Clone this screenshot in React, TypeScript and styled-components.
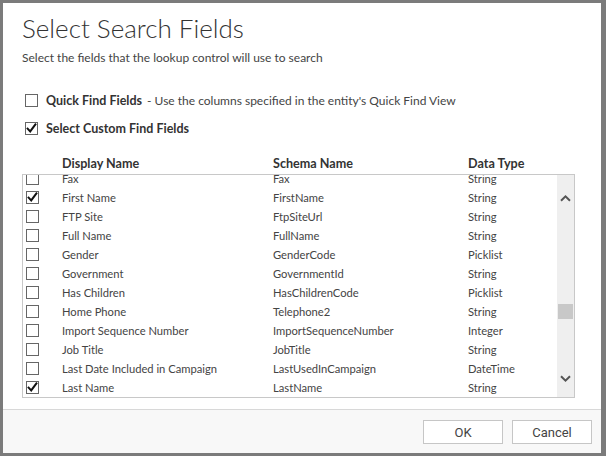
import React from 'react'
import styled, { createGlobalStyle } from 'styled-components'

const FONT = '"Segoe UI", Lato, "Liberation Sans", sans-serif'

const GlobalStyle = createGlobalStyle`
  html, body {
    margin: 0;
    padding: 0;
    background: #7b7b7b;
  }
  body {
    font-family: ${FONT};
    color: #444;
  }
`

interface FieldRow {
  display: string
  schema: string
  type: string
  checked?: boolean
}

const fields: FieldRow[] = [
  { display: 'Fax', schema: 'Fax', type: 'String' },
  { display: 'First Name', schema: 'FirstName', type: 'String', checked: true },
  { display: 'FTP Site', schema: 'FtpSiteUrl', type: 'String' },
  { display: 'Full Name', schema: 'FullName', type: 'String' },
  { display: 'Gender', schema: 'GenderCode', type: 'Picklist' },
  { display: 'Government', schema: 'GovernmentId', type: 'String' },
  { display: 'Has Children', schema: 'HasChildrenCode', type: 'Picklist' },
  { display: 'Home Phone', schema: 'Telephone2', type: 'String' },
  { display: 'Import Sequence Number', schema: 'ImportSequenceNumber', type: 'Integer' },
  { display: 'Job Title', schema: 'JobTitle', type: 'String' },
  { display: 'Last Date Included in Campaign', schema: 'LastUsedInCampaign', type: 'DateTime' },
  { display: 'Last Name', schema: 'LastName', type: 'String', checked: true },
]

const CheckBox: React.FC<{ checked?: boolean }> = ({ checked }) => (
  <BoxSvg width="13" height="13" viewBox="0 0 13 13">
    <rect x="0.5" y="0.5" width="12" height="12" fill="#fff" stroke="#666" />
    {checked && (
      <path d="M2.6 6.6 L5.2 9.4 L10.4 2.4" fill="none" stroke="#111" strokeWidth="2" strokeLinecap="square" />
    )}
  </BoxSvg>
)

const Chevron: React.FC<{ down?: boolean }> = ({ down }) => (
  <svg width="11" height="7" viewBox="0 0 11 7">
    <path
      d={down ? 'M1 1.2 L5.5 5.6 L10 1.2' : 'M1 5.8 L5.5 1.4 L10 5.8'}
      fill="none"
      stroke="#555"
      strokeWidth="2"
    />
  </svg>
)

const App: React.FC = () => {
  return (
    <>
      <GlobalStyle />
      <Page>
        <Dialog>
          <Body>
            <Title>Select Search Fields</Title>
            <Subtitle>Select the fields that the lookup control will use to search</Subtitle>

            <Options>
              <OptionRow>
                <CheckBox />
                <OptionLabel>
                  <strong>Quick Find Fields</strong> - Use the columns specified in the entity's Quick Find View
                </OptionLabel>
              </OptionRow>
              <OptionRow>
                <CheckBox checked />
                <OptionLabel>
                  <strong>Select Custom Find Fields</strong>
                </OptionLabel>
              </OptionRow>
            </Options>

            <HeaderRow>
              <span />
              <HeaderCell>Display Name</HeaderCell>
              <HeaderCell>Schema Name</HeaderCell>
              <HeaderCell>Data Type</HeaderCell>
            </HeaderRow>

            <ListBox>
              <Viewport>
                <Rows $scroll={6}>
                  {fields.map((f) => (
                    <Row key={f.schema}>
                      <CheckCell>
                        <CheckBox checked={f.checked} />
                      </CheckCell>
                      <Cell>{f.display}</Cell>
                      <Cell>{f.schema}</Cell>
                      <Cell>{f.type}</Cell>
                    </Row>
                  ))}
                </Rows>
              </Viewport>
              <ScrollBar>
                <ArrowButton $top>
                  <Chevron />
                </ArrowButton>
                <Track>
                  <Thumb $offset={98} />
                </Track>
                <ArrowButton>
                  <Chevron down />
                </ArrowButton>
              </ScrollBar>
            </ListBox>
          </Body>

          <Footer>
            <FooterButton>OK</FooterButton>
            <FooterButton>Cancel</FooterButton>
          </Footer>
        </Dialog>
      </Page>
    </>
  )
}

const Page = styled.div`
  box-sizing: border-box;
  width: 606px;
  height: 456px;
  padding: 3px 5px 3px 3px;
`

const Dialog = styled.div`
  height: 100%;
  background: #fff;
  display: flex;
  flex-direction: column;
`

const Body = styled.div`
  padding: 8px 26px 0 19px;
  display: flex;
  flex-direction: column;
`

const Title = styled.h1`
  margin: 0;
  font-family: ${FONT};
  font-weight: 300;
  font-size: 26px;
  line-height: 34px;
  color: #333;
`

const Subtitle = styled.div`
  margin-top: 5px;
  font-size: 12px;
  line-height: 16px;
  color: #444;
`

const Options = styled.div`
  margin-top: 25px;
  display: flex;
  flex-direction: column;
  gap: 9px;
`

const OptionRow = styled.div`
  display: flex;
  align-items: center;
  gap: 8px;
  padding-left: 3px;
  height: 19px;
  font-size: 12px;

  strong {
    font-size: 12.5px;
    font-weight: 700;
    color: #333;
    margin-right: 2px;
  }
`

const OptionLabel = styled.span`
  color: #444;
`

const BoxSvg = styled.svg`
  display: block;
  flex: none;
`

const HeaderRow = styled.div`
  margin-top: 14px;
  display: grid;
  grid-template-columns: 40px 211px 195px 1fr;
  height: 22px;
  align-items: center;
`

const HeaderCell = styled.div`
  font-size: 12.6px;
  font-weight: 700;
  color: #333;
`

const ListBox = styled.div`
  display: flex;
  height: 222px;
  border: 1px solid #c8c8c8;
`

const Viewport = styled.div`
  flex: 1;
  overflow: hidden;
`

const Rows = styled.div<{ $scroll: number }>`
  margin-top: ${(p) => -p.$scroll}px;
`

const Row = styled.div`
  display: grid;
  grid-template-columns: 39px 211px 195px 1fr;
  height: 19px;
  align-items: center;
  font-size: 11.2px;
  color: #444;
`

const CheckCell = styled.div`
  padding-left: 3px;
`

const Cell = styled.div`
  white-space: nowrap;
`

const ScrollBar = styled.div`
  width: 17px;
  background: #efefef;
  display: flex;
  flex-direction: column;
`

const ArrowButton = styled.div<{ $top?: boolean }>`
  height: 16px;
  display: flex;
  align-items: center;
  justify-content: center;
  margin-top: ${(p) => (p.$top ? '15px' : '0')};
  margin-bottom: ${(p) => (p.$top ? '0' : '11px')};
`

const Track = styled.div`
  flex: 1;
`

const Thumb = styled.div<{ $offset: number }>`
  margin: ${(p) => p.$offset}px 1px 0 1px;
  height: 15px;
  background: #c8c8c8;
`

const Footer = styled.div`
  flex: 1;
  margin-top: 11px;
  border-top: 1px solid #d8d8d8;
  background: #f8f8f8;
  display: flex;
  justify-content: flex-end;
  align-items: flex-start;
  gap: 9px;
  padding: 10px 9px 0 0;
`

const FooterButton = styled.button`
  width: 80px;
  height: 24px;
  border: 1px solid #c6c6c6;
  background: #fff;
  font-family: Roboto, ${FONT};
  font-size: 13px;
  color: #444;
  padding: 0;
`

export default App
